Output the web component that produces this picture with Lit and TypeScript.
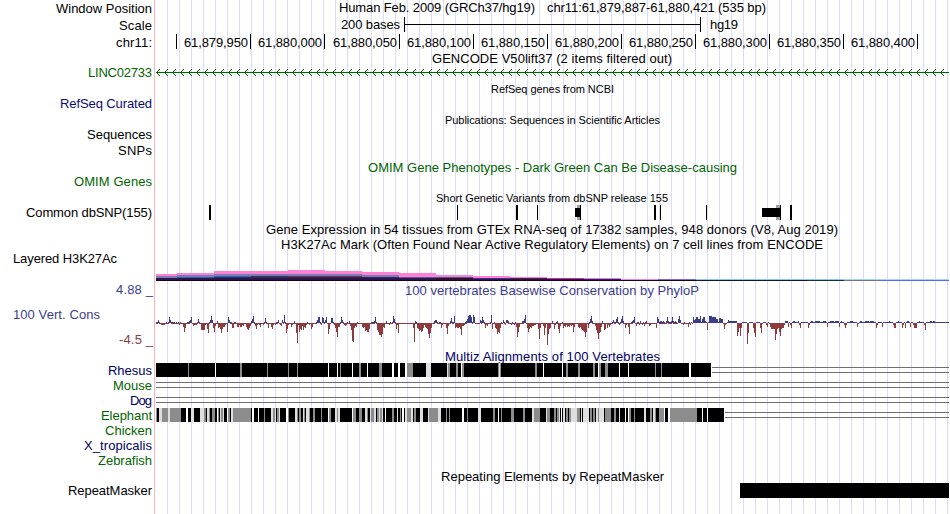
import { LitElement, html, svg, css } from "lit";
import { customElement } from "lit/decorators.js";

const LEFT = 155;
const END = 949;
const BLACK = "#000000";
const GREEN = "#006400";
const NAVY = "#0c0c78";
const DEEP = "#000064";
const BLUE = "#3c3c8c";
const BROWN = "#8c3c3c";

// A text run: content, left edge, right edge, baseline, colour, font size.
type Run = [string, number, number, number, string?, number?];
interface Row {
  to: number;
  labels?: Run[];
  texts?: Run[];
  draw?: () => unknown;
}

const rect = (x: number, y: number, w: number, h: number, fill: string) =>
  svg`<rect x=${x} y=${y} width=${w} height=${h} fill=${fill}></rect>`;

const run = ([t, x0, x1, y, fill = BLACK, size = 13]: Run) =>
  svg`<text x=${x0} y=${y} textLength=${x1 - x0} fill=${fill} font-size=${size}>${t}</text>`;

/* ---- ruler ---- */
const positions = ["61,879,950", "61,880,000", "61,880,050", "61,880,100", "61,880,150", "61,880,200",
  "61,880,250", "61,880,300", "61,880,350", "61,880,400"];
const tickXs = [176, 250, 324, 399, 473, 547, 621, 695, 769, 843, 917];
const ticks = () => tickXs.map((x) => rect(x, 34, 1, 15, BLACK));
const numbers: Run[] = positions.map((p, i) => [p, tickXs[i + 1] - 66, tickXs[i + 1] - 2, 47]);

const scaleBar = () => [rect(404, 17, 1, 15, BLACK), rect(404, 24, 297, 1, BLACK), rect(700, 17, 1, 15, BLACK)];

/* ---- gene arrows ---- */
const gene = () => {
  let d = "";
  for (let x = 156; x < 947; x += 8) d += `M${x + 4} 69L${x + 0.5} 72.5L${x + 4} 76`;
  return [rect(156, 72, 793, 1, GREEN), svg`<path d=${d} fill="none" stroke=${GREEN} stroke-width="1"></path>`];
};

/* ---- variants ---- */
const snps = () => [
  ...[[209, 2], [457, 1], [516, 2], [537, 1], [654, 2], [660, 1], [706, 1], [790, 2]].map(([x, w]) => rect(x, 205, w, 15, BLACK)),
  rect(577, 205, 3, 15, "#a0a0a0"), rect(575, 208, 5, 9, BLACK), rect(580, 205, 1, 15, BLACK),
  rect(776, 205, 4, 15, "#a0a0a0"), rect(762, 208, 18, 9, BLACK), rect(780, 205, 1, 15, BLACK),
];

/* ---- layered H3K27Ac: start, then [top, colour] bands down to y=281 ---- */
const PINK = "#ff80d4", SLATE = "#7c7cb4", DARK = "#2c1450", INK = "#180418";
const layers: [number, [number, string][]][] = [
  [156, [[274, PINK], [276, SLATE], [278, DARK], [280, INK]]],
  [177, [[273, PINK], [275, SLATE], [277, "#3464a4"], [278, DARK], [280, INK]]],
  [214, [[271, PINK], [274, SLATE], [276, "#2c6cb4"], [277, "#302860"], [278, DARK], [280, INK]]],
  [251, [[271, PINK], [274, SLATE], [276, "#343058"], [278, DARK], [280, INK]]],
  [288, [[270, PINK], [274, SLATE], [276, "#6c3454"], [277, "#302848"], [278, DARK], [280, INK]]],
  [325, [[271, PINK], [274, SLATE], [276, "#6c3454"], [277, "#302848"], [278, DARK], [280, INK]]],
  [362, [[272, PINK], [275, SLATE], [277, "#342c5c"], [278, DARK], [280, INK]]],
  [399, [[273, PINK], [277, "#5c5c94"], [278, DARK], [280, INK]]],
  [436, [[275, PINK], [277, "#445c84"], [278, "#340c34"], [280, INK]]],
  [473, [[276, PINK], [278, "#3030a0"], [279, "#34103c"], [280, INK]]],
  [510, [[277, PINK], [278, "#501c54"], [279, "#34103c"], [280, INK]]],
  [547, [[278, "#cc30b8"], [279, "#340c3c"], [280, INK]]],
  [584, [[278, "#cc80ff"], [279, "#481850"], [280, INK]]],
  [621, [[279, "#e08ce8"], [280, INK]]],
  [658, [[279, "#7468e8"], [280, INK]]],
  [696, [[279, "#8cc8ec"], [280, "#14142c"]]],
  [807, [[279, "#8cc8ec"], [280, "#14343c"]]],
  [844, [[279, "#a4d4f0"], [280, "#74747c"]]],
  [881, [[279, "#a4d4f8"], [280, "#5c64fc"]]],
];
const histone = () =>
  layers.flatMap(([x, bands], i) => {
    const w = (layers[i + 1]?.[0] ?? END) - x;
    return bands.map(([y, c], j) => rect(x, y, w, (bands[j + 1]?.[0] ?? 281) - y, c));
  });

/* ---- conservation: "x:h,h,h" runs of signed column heights ---- */
const scores = `156:1,1,3,1,-1,-2,-2,-2,-2,-1,1,-1,1,6,3,1,1,1,1,-1,1,-1,1,-2,1,-1,-1,-4,-9,-5,-1,1,1,2,3,6,-1,-3,-3,-6,-2,-1,1,-1
194:-2,-2,-2,1,4,1,-1,-7,-7,-7,-7,-2,-1,-6,-10,1,3,7,3,-5,-9,-3,-1,2,-5,-4,-6,-10,-6,-4,-4,-2,-1,-9,6,3,1,1,-5,-5,1,1,-1,-4,-4,-2
240:-4,-4,-2,-3,-1,-1,-4,-6,-7,-5,-3,2,4,7,1,-3,-6,-2,-1,-2,-4,-1,-1,-2,1,5,1,-1,-5,-1,-1,-4,-6,-2,-1,-2,1,1,3,-1,-2,-3,3,1,8,1,-10,-6,-2
290:-1,-4,-2,-1,2,-1,-10,-20,-2,-9,-6,-7,-3,-7,-4,-5,-2,1,-1,-2,-1,-6,-4,-1,-1,-1,1,3,6,6,1,-2,6,5,1,3,6,-1,-11,-6,-1,5,5,1,-2,-5,-9,-14,-4,-4,1,6,3,1,-2,-3,-2,1,-1,2,-3,-7,-18,-19,-5,-3,-4,1
361:-1,-4,-5,-4,-8,-7,-9,-9,-6,-1,1,1,1,2,6,1,-7,-9,-12,-12,-14,-11,-4,-5,-1,2,-1,-1,-2,1,-1,1,7,4,1,-6,-2,-10
413:-5,-19,2,1,-5,-6,-8,-7,-9,-8,-5,-2,-4,-5,-6,-11,-15,-10,-5,-1,-1,2,3,3,1,-1,1,1,-5,-2,-1,-1,-1,-5,-11,-3,-1,2,5,1,1,7,-5,-4,-5,-5,-4,-6,-12,-3,-3,-2,1,2,4,7,8,8,6,1,8,6,-1
480:3,2,6,3,1,-5,-2,-3,-1,-1,1,8,-6,-1,1,-5,-6,-11,-9,-10,-5,1,-1,3,1,-2,3,3,2,-1,-1,-2,1,-1,-2,1,-4,-14,-9,-4,-1,-1,2,2,4,8,-1,-5,-9,-6,-4,-5,-3,-3,-2,-2,-1,-1,-6,-16,-5,-1
543:-3,-12,-5,-1,-22,-11,-6,-5,-1,2,-1,-6,-2,1,2,-6,-10,-3,-1,1,-5,-3,-4,-2,-4,-3,-4,-2,-3,-2,-9,-4,-1,-1,-1,-4,-5,-4,-6,-7,-8,-9,-14,-9,-1,-5,1,4,7,2
595:-3,-7,-10,-16,-10,-9,-4,2,-1,-7,-6,-1,-5,-2,-4,-2,-1,1,3,1,1,4,6,1,-2,1,4,7,2,-1,-5,-2,-1,-4,-11,-1,1,2,3,6,-1,-3,1,1,-2,2,-1,-2,1,-3,1,2,-1,-1,-3,-2
656:-5,6,4,1,2,2,1,2,1,-1,2,6,2,1,1,2,6,2,1,2,1,-1,4,7,3,-1,-1,-2,1,-1,-1,-1,-4,1,-2,1,-1,6,3,4,6,6,4,4,7,1,4,6,6,2,1,-7,1,7,7,7,6,6,6,6,4,4,1,5,5,4,4,-1,-6,-2,-1,1,3,2,2,2,2,2,2,2,2
737:-13,-9,-5,-13,-5,1,1,1,1,1,-21,-10,1,1,1,1,-5,-10,-14,1,1,1,1,-5,-10,-1,1,1,1,-2,-4,1,-1,-4,-6,-6,-6,-6,-17,-11,-6,-5,-9,-13,-6,-5,-5,-2,2,2,2,-4,1,-2,-5,1,2,2,1,1,1,2,-2,-5,1
808:-5,-2,1,2,2,1,1,2,2,2,2,2,1,1,1,2,2,2,1,-4,1,1,2,2,2,2,1,2,2,2,2,-4,1,2,1,1,-2,-5,-2,1,1,1,2,2,2,1,1,1,1,-4,-1,1,2,2,1,1,1,2,2,2,2,1,2,2,2,2,1,1,-5,-2,1,1
882:-4,1,1,1,1,1,1,2,1,1,1,-2,-5,-5,1,1,2,1,1,1,-5,-2,1,-5,1,2,2,1,-4,1,1,-2,-5,-5,-5,1,1,2,1,1,1,1,-2,-7,1,1,1,1,2,2,1,2,2,1`;
const conservation = () => {
  const cols = new Map<number, number>();
  for (const line of scores.split("\n")) {
    const [x, list] = line.split(":");
    list.split(",").forEach((h, i) => cols.set(+x + i, +h));
  }
  let up = "", down = "";
  for (let x = 156; x < END; x++) {
    const h = cols.get(x) ?? (x > 735 ? 1 : -1);
    if (h > 0) up += `M${x} ${323 - h}h1v${h}h-1z`;
    else down += `M${x} 323h1v${-h}h-1z`;
    if (h > 0 && h < 3 && x < 690) down += `M${x} 323h1v1h-1z`;
  }
  return svg`<path d=${up} fill=${BLUE}></path><path d=${down} fill=${BROWN}></path>`;
};

/* ---- alignments ---- */
const shades: Record<string, string> = { k: "#000000", g: "#8c8c8c", l: "#dedede", w: "#ffffff" };
const rhesusGaps = `188g1 215w1 240g2 267g1 288g1 297g1 328w1 337w1 340g1 352w1 359g2 367w1 379g3 392w2 398w2 405w2 407g6
426l5 447l1 448g2 456g2 461w1 462g2 498g1 499l1 500g1 535g2 543w1 562w1 566g2 578g2 593g2 598w1 599g2 605g3 619w1 628w1 655g1 661g1 689w2`;
const pair = (x: number, y: number) => [rect(x, y, END - x, 1, "#6e6e6e"), rect(x, y + 5, END - x, 1, "#6e6e6e")];
const rhesus = () => [
  rect(156, 363, 555, 14, BLACK),
  ...rhesusGaps.split(/\s+/).map((s) => {
    const m = s.match(/(\d+)([gwl])(\d+)/)!;
    return rect(+m[1], 363, +m[3], 14, shades[m[2]]);
  }),
  ...pair(712, 367),
];
// Each entry is the x where a shade begins; it lasts until the next entry.
const elephantStops = `156g 157k 159l 162g 168l 170g 181k 186w 188k 191l 194k 200l 204g 206k 207l 209g 210k 212g 215k 217w 218g 219k 220l 221g 223l
224k 227w 228g 230k 231l 233g 251k 252w 254k 258w 259k 264g 265k 271l 273g 275l 276k 277g 279l 280k 286w 288g 289k 295l 297g 298k 299g 301k 303l
304g 305k 306l 309g 310k 313g 315k 321g 322k 328w 329g 331k 335l 337g 338l 340k 352w 353g 356k 359g 362k 365l 367g 368k 370l 371g 374l 376k 377g
379l 380g 382l 383k 385w 386k 392g 394k 397l 398k 400g 401k 402w 404k 405l 407g 411l 413k 414g 416k 420l 423k 428l 429g 438l 441k 446g 447k 449g
450k 462w 464k 467g 468k 478l 481k 493g 495k 498w 499k 501g 502k 511g 514k 523g 525k 532l 534g 540k 546l 547g 550k 554g 556k 557g 559l 560k 561w
562k 563l 565k 566g 568k 569g 571l 577g 580k 581l 582k 583l 589k 590g 592k 593g 595k 596l 598g 599l 604k 605g 611k 614g 616k 619l 620k 625w 626k
628w 629g 631k 634g 635k 644l 646k 650g 652k 653l 655g 656k 659g 664w 665k 668w 670g 697k 702w 703k 707w 708k 724w`;
const elephant = () => {
  const stops = elephantStops.split(/\s+/);
  return [
    ...stops.slice(0, -1).map((s, i) => {
      const x = parseInt(s);
      return rect(x, 408, parseInt(stops[i + 1]) - x, 14, shades[s.slice(-1)]);
    }),
    ...pair(725, 412),
  ];
};

const rows: Row[] = [
  { to: 17, labels: [["Window Position", 56, 152, 13]], texts: [["Human Feb. 2009 (GRCh37/hg19)", 339, 535, 12], ["chr11:61,879,887-61,880,421 (535 bp)", 547, 766, 12]] },
  { to: 33, labels: [["Scale", 119, 152, 30]], texts: [["200 bases", 341, 400, 29], ["hg19", 710, 738, 29]], draw: scaleBar },
  { to: 50, labels: [["chr11:", 116, 152, 47]], texts: numbers, draw: ticks },
  { to: 66, texts: [["GENCODE V50lift37 (2 items filtered out)", 432, 672, 63]] },
  { to: 82, labels: [["LINC02733", 88, 152, 77, GREEN]], draw: gene },
  { to: 97, texts: [["RefSeq genes from NCBI", 491, 614, 93, BLACK, 11]] },
  { to: 113, labels: [["RefSeq Curated", 60, 152, 108, NAVY]] },
  { to: 128, texts: [["Publications: Sequences in Scientific Articles", 445, 660, 124, BLACK, 11]] },
  { to: 144, labels: [["Sequences", 87, 152, 139]] },
  { to: 160, labels: [["SNPs", 118, 152, 155]] },
  { to: 175, texts: [["OMIM Gene Phenotypes - Dark Green Can Be Disease-causing", 368, 737, 172, GREEN]] },
  { to: 190, labels: [["OMIM Genes", 74, 152, 186, GREEN]] },
  { to: 205, texts: [["Short Genetic Variants from dbSNP release 155", 436, 668, 202, BLACK, 11]] },
  { to: 221, labels: [["Common dbSNP(155)", 26, 152, 217]], draw: snps },
  { to: 237, texts: [["Gene Expression in 54 tissues from GTEx RNA-seq of 17382 samples, 948 donors (V8, Aug 2019)", 266, 838, 234]] },
  { to: 252, texts: [["H3K27Ac Mark (Often Found Near Active Regulatory Elements) on 7 cell lines from ENCODE", 281, 823, 249]] },
  { to: 282, labels: [["Layered H3K27Ac", 13, 117, 263]], draw: histone },
  { to: 299, labels: [["4.88 _", 116, 153, 294, BLUE]], texts: [["100 vertebrates Basewise Conservation by PhyloP", 405, 699, 295, BLUE]] },
  { to: 348, labels: [["100 Vert. Cons", 13, 100, 319, BLUE], ["-4.5 _", 119, 153, 344, BROWN]], draw: conservation },
  { to: 363, texts: [["Multiz Alignments of 100 Vertebrates", 445, 660, 361, DEEP]] },
  { to: 378, labels: [["Rhesus", 108, 152, 375, DEEP]], draw: rhesus },
  { to: 393, labels: [["Mouse", 113, 152, 390, GREEN]], draw: () => pair(156, 382) },
  { to: 408, labels: [["Dog", 130, 152, 405, DEEP]], draw: () => pair(156, 397) },
  { to: 423, labels: [["Elephant", 101, 152, 420, GREEN]], draw: elephant },
  { to: 438, labels: [["Chicken", 105, 152, 435, GREEN]] },
  { to: 453, labels: [["X_tropicalis", 84, 152, 450, DEEP]] },
  { to: 468, labels: [["Zebrafish", 98, 152, 465, GREEN]] },
  { to: 483, texts: [["Repeating Elements by RepeatMasker", 441, 664, 481]] },
  { to: 514, labels: [["RepeatMasker", 68, 152, 495]], draw: () => rect(740, 483, 209, 15, BLACK) },
];

@customElement("app-root")
export class AppRoot extends LitElement {
  static styles = css`
    :host {
      display: block;
      width: 950px;
      height: 514px;
      overflow: hidden;
      background: #fff;
      font-family: "Liberation Sans", Arial, sans-serif;
    }
    .browser {
      display: flex;
      flex-direction: column;
      background:
        linear-gradient(#ffb4b4, #ffb4b4) 154px 0 / 1px 100% no-repeat,
        repeating-linear-gradient(90deg, #dcdcfa 0 1px, transparent 1px 12px) 167px 0 / 783px 100% no-repeat;
    }
    .row {
      display: grid;
      grid-template-columns: 155px 795px;
    }
    svg {
      display: block;
      overflow: visible;
    }
    text {
      white-space: pre;
    }
    rect,
    .track path {
      shape-rendering: crispEdges;
    }
    .track path[stroke] {
      shape-rendering: auto;
    }
  `;

  render() {
    return html`<div class="browser">
      ${rows.map((r, i) => {
        const y = i ? rows[i - 1].to : 0;
        const h = r.to - y;
        return html`<div class="row">
          <svg class="label" width="155" height=${h} viewBox=${`0 ${y} 155 ${h}`}>${(r.labels ?? []).map(run)}</svg>
          <svg class="track" width="795" height=${h} viewBox=${`${LEFT} ${y} 795 ${h}`}>
            ${r.draw?.()}${(r.texts ?? []).map(run)}
          </svg>
        </div>`;
      })}
    </div>`;
  }
}
